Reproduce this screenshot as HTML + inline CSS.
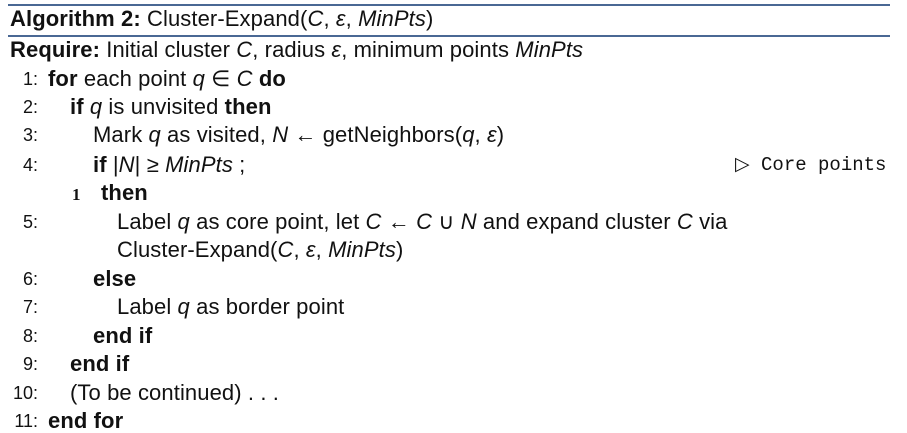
<!DOCTYPE html>
<html><head><meta charset="utf-8"><style>
body{margin:0;width:907px;height:430px;background:#fff;position:relative;overflow:hidden;font-family:"Liberation Sans",sans-serif;font-size:22px;letter-spacing:0.1px;color:#111}
.r{position:absolute;left:8px;width:882px;height:2px;background:#4a6894}
.l{position:absolute;white-space:nowrap;line-height:24px}
.n{position:absolute;width:38px;text-align:right;white-space:nowrap;line-height:24px;font-size:18px;letter-spacing:0}
b{font-weight:bold}
i{font-style:italic}
.m{font-family:"Liberation Mono",monospace;font-size:19px;letter-spacing:0}
</style></head><body>
<div class="r" style="top:4px"></div>
<div class="r" style="top:35px"></div>
<div class="l" style="left:10px;top:7px"><b>Algorithm 2:</b> Cluster-Expand(<i>C</i>, <i>ε</i>, <i>MinPts</i>)</div>
<div class="l" style="left:10px;top:38px"><b>Require:</b> Initial cluster <i>C</i>, radius <i>ε</i>, minimum points <i>MinPts</i></div>
<div class="n" style="left:0;top:67px">1:</div><div class="l" style="left:48px;top:67px"><b>for</b> each point <i>q</i> ∈ <i>C</i> <b>do</b></div>
<div class="n" style="left:0;top:95px">2:</div><div class="l" style="left:70px;top:95px"><b>if</b> <i>q</i> is unvisited <b>then</b></div>
<div class="n" style="left:0;top:123px">3:</div><div class="l" style="left:93px;top:123px">Mark <i>q</i> as visited, <i>N</i> ← getNeighbors(<i>q</i>, <i>ε</i>)</div>
<div class="n" style="left:0;top:153px">4:</div><div class="l" style="left:93px;top:153px"><b>if</b> |<i>N</i>| ≥ <i>MinPts</i> ;</div>
<div class="l m" style="left:735px;top:153px">▷ Core points</div>
<div class="l" style="left:72px;top:181px"><b style="font-family:'Liberation Serif',serif;font-size:17px">1</b></div>
<div class="l" style="left:101px;top:181px"><b>then</b></div>
<div class="n" style="left:0;top:210px">5:</div><div class="l" style="left:117px;top:210px">Label <i>q</i> as core point, let <i>C</i> ← <i>C</i> ∪ <i>N</i> and expand cluster <i>C</i> via</div>
<div class="l" style="left:117px;top:238px">Cluster-Expand(<i>C</i>, <i>ε</i>, <i>MinPts</i>)</div>
<div class="n" style="left:0;top:267px">6:</div><div class="l" style="left:93px;top:267px"><b>else</b></div>
<div class="n" style="left:0;top:295px">7:</div><div class="l" style="left:117px;top:295px">Label <i>q</i> as border point</div>
<div class="n" style="left:0;top:324px">8:</div><div class="l" style="left:93px;top:324px"><b>end if</b></div>
<div class="n" style="left:0;top:352px">9:</div><div class="l" style="left:70px;top:352px"><b>end if</b></div>
<div class="n" style="left:0;top:381px">10:</div><div class="l" style="left:70px;top:381px">(To be continued) . . .</div>
<div class="n" style="left:0;top:409px">11:</div><div class="l" style="left:48px;top:409px"><b>end for</b></div>
</body></html>
